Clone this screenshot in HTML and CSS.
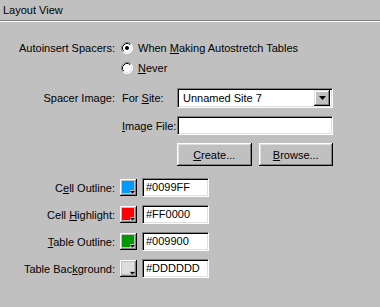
FILE: index.html
```html
<!DOCTYPE html>
<html>
<head>
<meta charset="utf-8">
<link rel="stylesheet" href="styles.css">
</head>
<body>
<div class="header">Layout View</div>
<div class="form">
  <div class="autoinsert">
    <div class="label">Autoinsert Spacers:</div>
    <div class="radios">
      <div class="radio">
        <svg width="12" height="12" viewBox="0 0 12 12">
          <circle cx="6" cy="6" r="5.5" fill="#fff"/>
          <path d="M2.11 9.89 A5.5 5.5 0 0 1 9.89 2.11" fill="none" stroke="#808080"/>
          <path d="M9.89 2.11 A5.5 5.5 0 0 1 2.11 9.89" fill="none" stroke="#fff"/>
          <path d="M2.82 9.18 A4.5 4.5 0 0 1 9.18 2.82" fill="none" stroke="#000"/>
          <path d="M9.18 2.82 A4.5 4.5 0 0 1 2.82 9.18" fill="none" stroke="#dfdfdf"/>
          <circle cx="6" cy="6" r="3.6" fill="#fff"/>
          <circle cx="6" cy="6" r="2" fill="#000"/>
        </svg>
        <span>When <u>M</u>aking Autostretch Tables</span>
      </div>
      <div class="radio">
        <svg width="12" height="12" viewBox="0 0 12 12">
          <circle cx="6" cy="6" r="5.5" fill="#fff"/>
          <path d="M2.11 9.89 A5.5 5.5 0 0 1 9.89 2.11" fill="none" stroke="#808080"/>
          <path d="M9.89 2.11 A5.5 5.5 0 0 1 2.11 9.89" fill="none" stroke="#fff"/>
          <path d="M2.82 9.18 A4.5 4.5 0 0 1 9.18 2.82" fill="none" stroke="#000"/>
          <path d="M9.18 2.82 A4.5 4.5 0 0 1 2.82 9.18" fill="none" stroke="#dfdfdf"/>
          <circle cx="6" cy="6" r="3.6" fill="#fff"/>
        </svg>
        <span><u>N</u>ever</span>
      </div>
    </div>
  </div>

  <div class="spacer">
    <div class="label">Spacer Image:</div>
    <div class="sublabel">For <u>S</u>ite:</div>
    <div class="select">
      <span class="select-text">Unnamed Site 7</span>
      <span class="select-btn">
        <svg width="7" height="4" viewBox="0 0 7 4"><path d="M0 0H7L3.5 4Z" fill="#000"/></svg>
      </span>
    </div>
    <div class="sublabel row2"><u>I</u>mage File:</div>
    <div class="textbox row2"></div>
    <div class="buttons">
      <div class="btn"><u>C</u>reate...</div>
      <div class="btn"><u>B</u>rowse...</div>
    </div>
  </div>

  <div class="colors">
    <div class="color-row">
      <div class="label">C<u>e</u>ll Outline:</div>
      <svg class="swatch" width="17" height="17" viewBox="0 0 17 17">
        <rect width="17" height="17" fill="#c0c0c0"/>
        <path d="M0 0.5H16.5M0.5 0V16.5" stroke="#fff"/>
        <path d="M0 16.5H17M16.5 0V17" stroke="#000"/>
        <path d="M1 15.5H16M15.5 1V16" stroke="#808080"/>
        <path d="M2 2H14V11H10V14H2Z" fill="#0099FF"/>
        <path d="M10 12H15L12.5 14.5Z" fill="#000"/>
      </svg>
      <div class="hexbox">#0099FF</div>
    </div>
    <div class="color-row">
      <div class="label">Cell <u>H</u>ighlight:</div>
      <svg class="swatch" width="17" height="17" viewBox="0 0 17 17">
        <rect width="17" height="17" fill="#c0c0c0"/>
        <path d="M0 0.5H16.5M0.5 0V16.5" stroke="#fff"/>
        <path d="M0 16.5H17M16.5 0V17" stroke="#000"/>
        <path d="M1 15.5H16M15.5 1V16" stroke="#808080"/>
        <path d="M2 2H14V11H10V14H2Z" fill="#FF0000"/>
        <path d="M10 12H15L12.5 14.5Z" fill="#000"/>
      </svg>
      <div class="hexbox">#FF0000</div>
    </div>
    <div class="color-row">
      <div class="label"><u>T</u>able Outline:</div>
      <svg class="swatch" width="17" height="17" viewBox="0 0 17 17">
        <rect width="17" height="17" fill="#c0c0c0"/>
        <path d="M0 0.5H16.5M0.5 0V16.5" stroke="#fff"/>
        <path d="M0 16.5H17M16.5 0V17" stroke="#000"/>
        <path d="M1 15.5H16M15.5 1V16" stroke="#808080"/>
        <path d="M2 2H14V11H10V14H2Z" fill="#009900"/>
        <path d="M10 12H15L12.5 14.5Z" fill="#000"/>
      </svg>
      <div class="hexbox">#009900</div>
    </div>
    <div class="color-row">
      <div class="label">Table Bac<u>k</u>ground:</div>
      <svg class="swatch" width="17" height="17" viewBox="0 0 17 17">
        <rect width="17" height="17" fill="#c0c0c0"/>
        <path d="M0 0.5H16.5M0.5 0V16.5" stroke="#fff"/>
        <path d="M0 16.5H17M16.5 0V17" stroke="#000"/>
        <path d="M1 15.5H16M15.5 1V16" stroke="#808080"/>
        <path d="M2 2H14V11H10V14H2Z" fill="#DDDDDD"/>
        <path d="M10 12H15L12.5 14.5Z" fill="#000"/>
      </svg>
      <div class="hexbox">#DDDDDD</div>
    </div>
  </div>
</div>
</body>
</html>
```

FILE: styles.css
```css
html, body {
  margin: 0;
  padding: 0;
  background: #c0c0c0;
}
body {
  width: 380px;
  height: 307px;
  overflow: hidden;
  font-family: "Liberation Sans", Arial, sans-serif;
  font-size: 11px;
  color: #000;
}
u {
  text-decoration: underline;
  text-underline-offset: 1px;
}
.header {
  height: 20px;
  line-height: 20px;
  padding-left: 3px;
  border-bottom: 1px solid #808080;
  box-shadow: 0 1px 0 #fff;
}
.label {
  width: 116px;
  text-align: right;
  white-space: nowrap;
  box-sizing: border-box;
  padding-right: 1px;
}
.autoinsert {
  display: flex;
  margin-top: 17px;
}
.autoinsert .label {
  height: 20px;
  line-height: 20px;
}
.radios {
  display: flex;
  flex-direction: column;
  margin-left: 5px;
}
.radio {
  display: flex;
  align-items: center;
  height: 20px;
  gap: 5px;
  white-space: nowrap;
}
.radio svg {
  display: block;
}
.spacer {
  display: grid;
  grid-template-columns: 116px 61px 156px;
  grid-template-rows: 20px 19px 23px;
  row-gap: 8px;
  margin-top: 10px;
  align-items: center;
}
.sublabel {
  padding-left: 6px;
  white-space: nowrap;
}
.row2 {
  grid-row: 2;
}
.sublabel.row2 {
  grid-column: 2;
}
.textbox.row2 {
  grid-column: 3;
}
.select, .textbox, .hexbox {
  box-sizing: border-box;
  background: #fff;
  border-top: 1px solid #808080;
  border-left: 1px solid #808080;
  border-right: 1px solid #fff;
  border-bottom: 1px solid #fff;
  box-shadow: inset 1px 1px 0 #000, inset -1px -1px 0 #dfdfdf;
}
.select {
  height: 20px;
  display: flex;
  align-items: center;
  padding: 2px 2px 2px 5px;
}
.select-text {
  flex: 1;
}
.select-btn {
  width: 16px;
  height: 16px;
  box-sizing: border-box;
  background: #c0c0c0;
  display: flex;
  align-items: center;
  justify-content: center;
  box-shadow: inset -1px -1px 0 #000, inset 1px 1px 0 #dfdfdf, inset -2px -2px 0 #808080, inset 2px 2px 0 #fff;
}
.select-btn svg {
  display: block;
}
.textbox {
  height: 19px;
}
.buttons {
  grid-row: 3;
  grid-column: 3;
  display: flex;
  gap: 7px;
  height: 23px;
}
.btn {
  flex: 1;
  display: flex;
  align-items: center;
  justify-content: center;
  background: #c0c0c0;
  box-shadow: inset -1px -1px 0 #000, inset 1px 1px 0 #fff, inset -2px -2px 0 #808080, inset 2px 2px 0 #dfdfdf;
}
.colors {
  margin-top: 12px;
  display: flex;
  flex-direction: column;
  gap: 8px;
}
.color-row {
  display: flex;
  align-items: center;
  height: 19px;
}
.swatch {
  display: block;
  margin-left: 4px;
}
.hexbox {
  margin-left: 5px;
  width: 67px;
  height: 19px;
  line-height: 17px;
  padding-left: 3px;
}
```
